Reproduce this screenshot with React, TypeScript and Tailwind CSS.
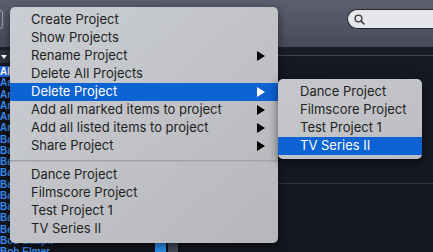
import React from 'react'

type Item = { label: string; sub?: boolean; active?: boolean }

const mainItems: Item[] = [
  { label: 'Create Project' },
  { label: 'Show Projects' },
  { label: 'Rename Project', sub: true },
  { label: 'Delete All Projects' },
  { label: 'Delete Project', sub: true, active: true },
  { label: 'Add all marked items to project', sub: true },
  { label: 'Add all listed items to project', sub: true },
  { label: 'Share Project', sub: true },
]

const projects = ['Dance Project', 'Filmscore Project', 'Test Project 1', 'TV Series II']

const people = [
  'All',
  'Adele',
  'Anna Lee',
  'Anders',
  'Antonia',
  'Arne Berg',
  'Bass Drum',
  'Bass Synth',
  'Bass Line',
  'Bassoon',
  'Bass Pad',
  'Bass FX',
  'Bass Loop',
  'Bass Hit',
  'Bells',
  'Bob Baupit',
  'Bob Elmer',
]

function Arrow({ white }: { white?: boolean }) {
  return (
    <svg width="8" height="10" viewBox="0 0 8 10" className="shrink-0">
      <polygon points="0,0 8,5 0,10" fill={white ? '#ffffff' : '#000000'} />
    </svg>
  )
}

function MenuRow({ item, padLeft }: { item: Item; padLeft: string }) {
  return (
    <div
      className={`flex h-[18px] items-center justify-between whitespace-nowrap pr-[13px] ${padLeft} ${
        item.active ? 'bg-[#0d63d3] text-white' : 'text-[#221f22]'
      }`}
    >
      <span>{item.label}</span>
      {item.sub && <Arrow white={item.active} />}
    </div>
  )
}

export default function App() {
  return (
    <div className="relative flex h-[252px] w-[433px] flex-col overflow-hidden bg-[#151922] font-['Liberation_Sans',Arial,sans-serif]">
      {/* Toolbar */}
      <div className="flex h-[47px] shrink-0 items-start bg-gradient-to-b from-[#5c5f6f] to-[#484b58]">
        <div className="mt-[10px] h-[19px] w-[3px] rounded-r-[4px] border border-l-0 border-[#9a9daa] bg-[#55586a]" />
        <div className="ml-auto mt-[9px] flex h-[20px] w-[86px] items-center rounded-l-full border border-r-0 border-[#26272d] bg-[#e6e7ea] pl-[6px]">
          <svg width="11" height="11" viewBox="0 0 11 11">
            <circle cx="4.5" cy="4.5" r="3.4" fill="none" stroke="#3a3a3f" strokeWidth="1.4" />
            <line x1="7" y1="7" x2="10" y2="10" stroke="#3a3a3f" strokeWidth="1.6" strokeLinecap="round" />
          </svg>
        </div>
      </div>

      {/* Body */}
      <div className="flex min-h-0 flex-1">
        {/* Left list */}
        <div className="w-[150px] shrink-0 bg-[#12151d]">
          <div className="h-[3px] bg-[#1d1f27]" />
          <div className="flex h-[13px] items-center bg-[#2f323b] pl-[1px]">
            <svg width="6" height="4" viewBox="0 0 6 4">
              <polygon points="0,0 6,0 3,4" fill="#ffffff" />
            </svg>
          </div>
          <div className="pt-[3px] text-[10px] font-bold leading-[11.27px]">
            {people.map((p, i) => (
              <div
                key={p}
                className={`h-[11.27px] whitespace-nowrap ${
                  i === 0 ? 'bg-[#2463d8] text-white' : 'text-[#3b8ff0]'
                }`}
              >
                {p}
              </div>
            ))}
          </div>
        </div>

        {/* Meter strip */}
        <div className="flex w-[30px] shrink-0 items-end gap-[2px] bg-[#11141b] pl-[5px]">
          <div className="h-[60px] w-[11px] bg-[#2e8ff0]" />
          <div className="h-[60px] w-[10px] bg-[#45485a]" />
        </div>

        {/* Right area */}
        <div className="flex flex-1 flex-col">
          <div className="h-[8px] bg-[#1b1d26]" />
          <div className="h-[1px] bg-[#394556]" />
          <div className="h-[127px] bg-[#151922]" />
          <div className="h-[1px] bg-[#2e3441]" />
          <div className="flex-1 bg-[#141720]" />
        </div>
      </div>

      {/* Main context menu */}
      <div className="absolute left-[10px] top-[7px] w-[268px] rounded-[5px] bg-gradient-to-br from-[#cbced4] to-[#b6b7ba] py-[4px] font-['Inter',sans-serif] text-[13px] shadow-[0_3px_10px_rgba(0,0,0,0.55)]">
        {mainItems.map((it) => (
          <MenuRow key={it.label} item={it} padLeft="pl-[21px]" />
        ))}
        <div className="h-[11px] pt-[5px]">
          <div className="h-[1px] bg-[#a2a4a8]" />
          <div className="h-[1px] bg-[#b0b2b6]" />
        </div>
        {projects.map((p) => (
          <MenuRow key={p} item={{ label: p }} padLeft="pl-[21px]" />
        ))}
        <div className="h-[1px]" />
      </div>

      {/* Submenu */}
      <div className="absolute left-[278px] top-[79px] w-[144px] rounded-[5px] bg-gradient-to-br from-[#c6c8cd] to-[#bcbdc0] py-[4px] font-['Inter',sans-serif] text-[13px] shadow-[0_3px_10px_rgba(0,0,0,0.55)]">
        {projects.map((p, i) => (
          <MenuRow key={p} item={{ label: p, active: i === 3 }} padLeft="pl-[22px]" />
        ))}
      </div>
    </div>
  )
}
